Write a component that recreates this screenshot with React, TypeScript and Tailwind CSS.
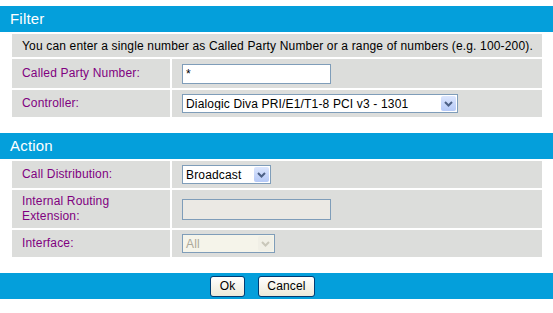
import { ReactNode } from 'react'

function Chevron({ disabled }: { disabled?: boolean }) {
  return (
    <svg width="9" height="6" viewBox="0 0 9 6">
      <path
        d="M1 1 L4.5 4.5 L8 1"
        fill="none"
        stroke={disabled ? '#c9c7ba' : '#4d6185'}
        strokeWidth="2"
      />
    </svg>
  )
}

function Select({ value, width, disabled }: { value: string; width: string; disabled?: boolean }) {
  return (
    <div
      className={`flex h-[19px] items-center border border-[#7f9db9] ${width} ${disabled ? 'bg-[#f5f4ea] text-[#aca899]' : 'bg-white text-black'}`}
    >
      <span className="flex-1 truncate pl-[3px] leading-none">{value}</span>
      <span
        className={`mr-px flex h-[15px] w-[15px] items-center justify-center rounded-[2px] ${disabled ? 'bg-[#f0efe6]' : 'bg-gradient-to-b from-[#dce6fd] to-[#b5c9f7]'}`}
      >
        <Chevron disabled={disabled} />
      </span>
    </div>
  )
}

function Row({ label, h, children }: { label: ReactNode; h: string; children: ReactNode }) {
  return (
    <div className={`flex gap-[2px] ${h}`}>
      <div className="flex w-[158px] items-center bg-[#dcdddb] pl-[10px] leading-[15px] text-[#800080]">
        {label}
      </div>
      <div className="flex flex-1 items-center bg-[#dcdddb] pl-[10px]">{children}</div>
    </div>
  )
}

function Header({ title }: { title: string }) {
  return (
    <div className="flex h-[26px] items-center bg-[#049fdb] pl-[10px] text-[15px] tracking-[0.2px] text-white">
      {title}
    </div>
  )
}

export default function App() {
  return (
    <div className="h-[313px] w-[553px] bg-white pt-[6px] text-[12px] tracking-[0.16px] font-['Liberation_Sans',Arial,sans-serif]">
      <Header title="Filter" />
      <div className="ml-[12px] mt-[2px] flex w-[530px] flex-col gap-[2px]">
        <div className="flex h-[23px] items-center bg-[#dcdddb] pl-[10px]">
          You can enter a single number as Called Party Number or a range of numbers (e.g. 100-200).
        </div>
        <Row label="Called Party Number:" h="h-[29px]">
          <input
            readOnly
            value="*"
            className="h-[20px] w-[149px] border border-[#7f9db9] bg-white px-[3px] text-[12px] outline-none"
          />
        </Row>
        <Row label="Controller:" h="h-[27px]">
          <Select value="Dialogic Diva PRI/E1/T1-8 PCI v3 - 1301" width="w-[276px]" />
        </Row>
      </div>

      <div className="mt-[16px]">
        <Header title="Action" />
      </div>
      <div className="ml-[12px] mt-[2px] flex w-[530px] flex-col gap-[2px]">
        <Row label="Call Distribution:" h="h-[27px]">
          <Select value="Broadcast" width="w-[89px]" />
        </Row>
        <Row
          label={
            <span>
              Internal Routing
              <br />
              Extension:
            </span>
          }
          h="h-[38px]"
        >
          <div className="h-[21px] w-[149px] border border-[#7f9db9] bg-[#ebe9e4]" />
        </Row>
        <Row label="Interface:" h="h-[27px]">
          <Select value="All" width="w-[93px]" disabled />
        </Row>
      </div>

      <div className="mt-[16px] flex h-[26px] items-center gap-[13px] bg-[#049fdb] pl-[210px]">
        <button className="h-[21px] w-[35px] rounded-[3px] border border-[#003c74] bg-gradient-to-b from-white to-[#ece9d8] text-[12px] text-black">
          Ok
        </button>
        <button className="h-[21px] w-[57px] rounded-[3px] border border-[#003c74] bg-gradient-to-b from-white to-[#ece9d8] text-[12px] text-black">
          Cancel
        </button>
      </div>
    </div>
  )
}
